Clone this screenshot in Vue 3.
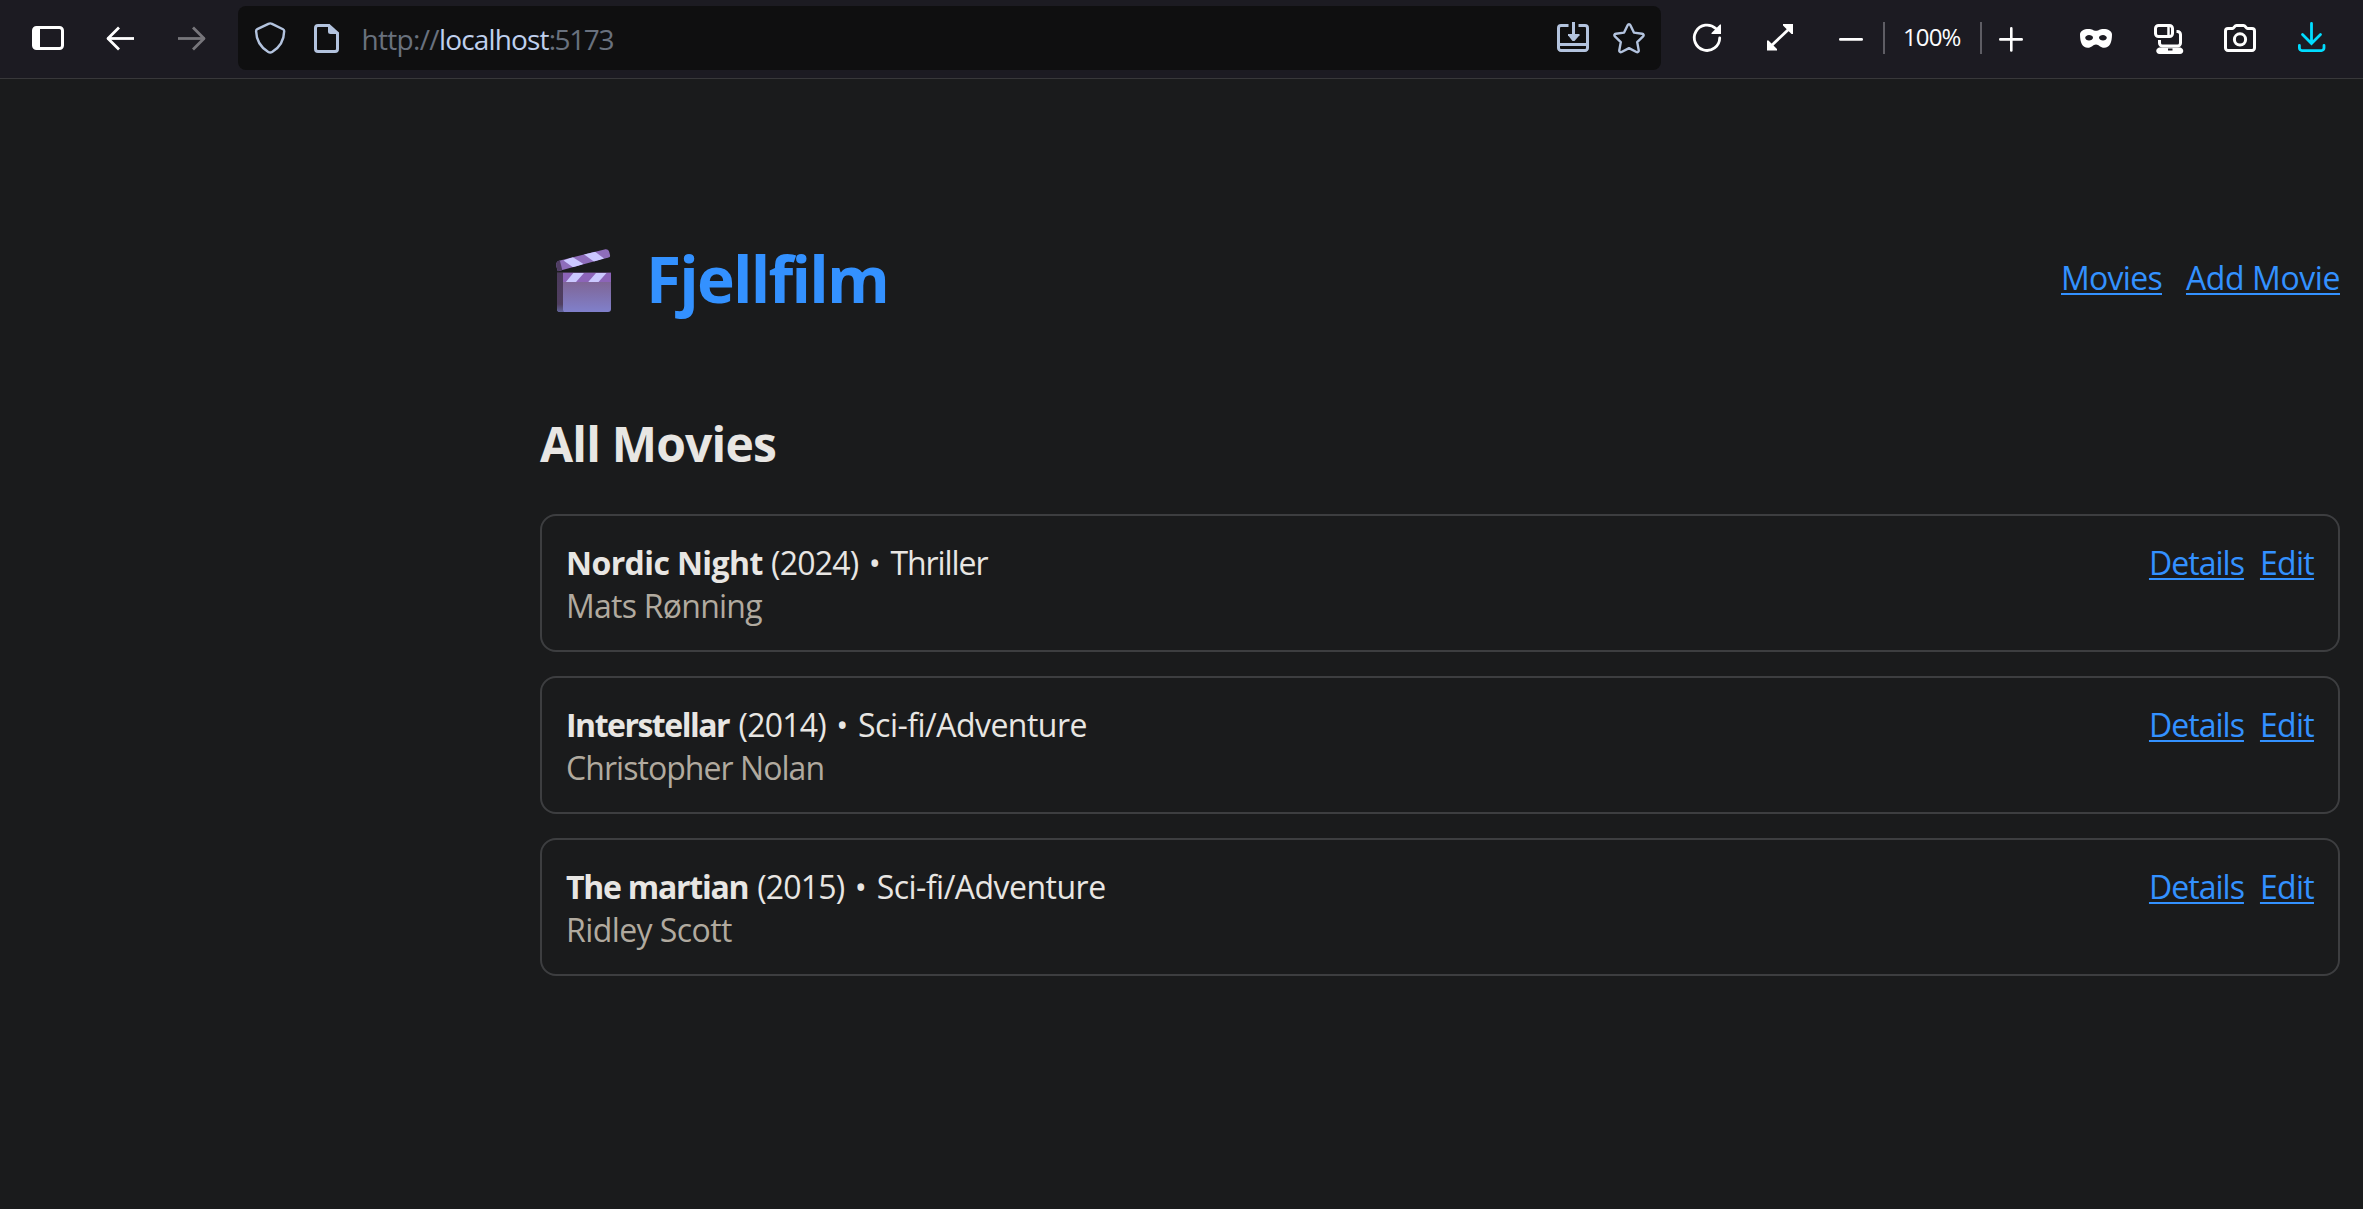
<script setup>
const movies = [
  { title: 'Nordic Night', year: 2024, genre: 'Thriller', director: 'Mats Rønning', slug: 'nordic' },
  { title: 'Interstellar', year: 2014, genre: 'Sci-fi/Adventure', director: 'Christopher Nolan', slug: 'interstellar' },
  { title: 'The martian', year: 2015, genre: 'Sci-fi/Adventure', director: 'Ridley Scott', slug: 'martian' },
]
</script>

<template>
  <div class="window">
    <div class="toolbar">
      <div class="nav-buttons">
        <svg class="icon" viewBox="0 0 32 32">
          <rect x="1.5" y="5.5" width="29" height="21" rx="3" fill="none" stroke="#fff" stroke-width="3" />
          <path d="M1 6h7v20H1z" fill="#fff" />
        </svg>
        <svg class="icon" viewBox="0 0 32 32" fill="none" stroke="#fff" stroke-width="2.8">
          <path d="M30 16.5H3.5" /><path d="M15 5.5 4 16.5l11 11" stroke-linejoin="round" />
        </svg>
        <svg class="icon" viewBox="0 0 32 32" fill="none" stroke="#77767b" stroke-width="2.8">
          <path d="M2 16.5h26.5" /><path d="M17 5.5l11 11-11 11" stroke-linejoin="round" />
        </svg>
      </div>

      <div class="urlbar">
        <svg class="icon" viewBox="0 0 32 32" fill="none" stroke="#b3c3de" stroke-width="2.4" stroke-linejoin="round">
          <path d="M16.2 1.4c-.6 0-1.200.2-1.800.5L3.300 7.200c-.8.4-1.200 1-1.200 1.900.2 8.400 3.500 15.600 12.200 20.900 1.300.8 2.500.8 3.800 0C26.800 24.700 30 17.500 30.200 9.100c0-.9-.4-1.500-1.200-1.900L18 1.900c-.6-.3-1.200-.5-1.800-.5z" />
        </svg>
        <svg class="icon page" viewBox="0 0 32 32">
          <path d="M19.5 3.5H8A2.500 2.500 0 0 0 5.500 6v21A2.500 2.500 0 0 0 8 29.500h17a2.500 2.500 0 0 0 2.500-2.500V11" fill="none" stroke="#b3c3de" stroke-width="3" />
          <path d="M18 2h1.500L29 10.500V12H20.500a2.500 2.500 0 0 1-2.500-2.500z" fill="#b3c3de" />
        </svg>
        <div class="url"><span class="scheme">http://</span><span class="host">localhost</span><span class="port">:5173</span></div>
        <svg class="icon" viewBox="0 0 32 32">
          <path d="M11.500 3.500H4A2.500 2.500 0 0 0 1.500 6v20A2.500 2.500 0 0 0 4 28.500h24a2.500 2.500 0 0 0 2.500-2.500V6A2.500 2.500 0 0 0 28 3.500h-6.500M2 22.500h28" fill="none" stroke="#b3c3de" stroke-width="3" />
          <path d="M16.500 0v13" stroke="#b3c3de" stroke-width="3" />
          <path d="M11 12h11.500v1.200L17.500 19h-2L11 13.200z" fill="#b3c3de" />
        </svg>
        <svg class="icon star" viewBox="0 0 32 32" fill="none" stroke="#b3c3de" stroke-width="2.4" stroke-linejoin="round">
          <path d="M14.600 3.200c.6-1.300 2.200-1.300 2.800 0l3.500 7.400 8.200 1.100c1.500.2 2 1.700 1 2.700l-5.900 5.700 1.500 8.200c.2 1.400-1 2.300-2.300 1.700L16 26.100l-7.400 3.900c-1.300.6-2.500-.3-2.300-1.700l1.500-8.200-5.900-5.700c-1-1-.5-2.500 1-2.700l8.200-1.100z" />
        </svg>
      </div>

      <svg class="icon reload" viewBox="0 0 32 32">
        <path d="M24.800 6.600A12.700 12.700 0 1 0 28.700 16" fill="none" stroke="#fff" stroke-width="2.8" stroke-linecap="round" />
        <path d="M30 2.500V12H20.500v-1L29 2.500z" fill="#fff" />
      </svg>
      <svg class="icon expand" viewBox="0 0 32 32">
        <path d="M6 25 26 6" stroke="#fff" stroke-width="2.8" />
        <path d="M19 2h10v10h-1.500L19 3.500zM3 18.500h1.500l8.500 8.500v1.500H3z" fill="#fff" />
      </svg>
      <svg class="icon minus" viewBox="0 0 32 32" stroke="#fff" stroke-width="2.6" stroke-linecap="round">
        <path d="M5.300 17.400h21.400" />
      </svg>
      <span class="rule"></span>
      <span class="zoom">100%</span>
      <span class="rule"></span>
      <svg class="icon plus" viewBox="0 0 32 32" stroke="#fff" stroke-width="2.6" stroke-linecap="round">
        <path d="M5.300 17.400h21.400M16.300 6.400v22" />
      </svg>
      <div class="extras">
        <svg class="icon" viewBox="0 0 32 32">
          <path fill="#fff" fill-rule="evenodd" d="M0 12.500C0 9 4 7 8.500 7c4 0 4.500 1.700 7.500 1.700S19.500 7 23.500 7C28 7 32 9 32 12.500c0 8-2.500 13.300-7.700 13.300-4 0-5.300-3.300-8.300-3.300s-4.300 3.300-8.300 3.300C2.500 25.800 0 20.500 0 12.500zM9 13c-2 0-3.800 1.500-3.800 2.700C5.200 17.300 7 18.500 9 18.500s4-1.200 4-2.800S11 13 9 13zm14 0c-2 0-4 1.100-4 2.700s2 2.800 4 2.800 3.800-1.200 3.800-2.800C26.800 14.500 25 13 23 13z" />
        </svg>
        <svg class="icon" viewBox="0 0 32 32">
          <rect x="3.5" y="3.5" width="17" height="11" rx="3" fill="none" stroke="#fff" stroke-width="3" />
          <path d="M16.500 5v8" stroke="#fff" stroke-width="2.5" />
          <path d="M24.500 9.500h1a3 3 0 0 1 3 3v8.500a3 3 0 0 1-3 3M7.500 18v3a3 3 0 0 0 3 3H26" fill="none" stroke="#fff" stroke-width="3" />
          <path fill="#fff" fill-rule="evenodd" d="M7 25.500h21.500c4 1.500 3.500 6.500-.5 6.500H7.500c-4 0-4.500-5-.5-6.500zM16 26.500v2h4.500v-2z" />
        </svg>
        <svg class="icon" viewBox="0 0 32 32" fill="none" stroke="#fff" stroke-width="3" stroke-linejoin="round">
          <path d="M4 6.500h4.500c1.500 0 2-3 4-3h7c2 0 2.500 3 4 3H28A2.500 2.500 0 0 1 30.500 9v17a2.500 2.500 0 0 1-2.500 2.500H4A2.500 2.500 0 0 1 1.500 26V9A2.500 2.500 0 0 1 4 6.500z" />
          <circle cx="16" cy="17.4" r="5.6" />
        </svg>
        <svg class="icon" viewBox="0 0 32 32" fill="none" stroke="#00ddff" stroke-width="2.8" stroke-linecap="round">
          <path d="M15.500 1.500v19.500M6.500 12.500l9 9 9-9M3.400 23.500v2.600a2.500 2.500 0 0 0 2.500 2.500h19.600a2.500 2.500 0 0 0 2.500-2.500v-2.600" />
        </svg>
      </div>
    </div>

    <main class="page-body">
      <header class="header">
        <div class="brand">
          <svg class="clapper" viewBox="0 0 56 64">
            <defs>
              <linearGradient id="board" x1="0" y1="0" x2="0" y2="1">
                <stop offset="0.1" stop-color="#7f618d" /><stop offset="1" stop-color="#8080cb" />
              </linearGradient>
              <linearGradient id="edge" x1="0" y1="0" x2="0" y2="1">
                <stop offset="0" stop-color="#4b3a5c" /><stop offset=".8" stop-color="#503f60" /><stop offset="1" stop-color="#61649a" />
              </linearGradient>
              <clipPath id="arm"><path d="M3 11.700 48.500.4c2.600-.6 4.200.5 4.900 3l.6 2.600c.3 1.500-.2 2.200-1.500 2.600L1.800 22.200.4 17.500c-.7-3 .2-5.200 2.600-5.800z" /></clipPath>
            </defs>
            <path d="M1 23.700h54V60a3 3 0 0 1-3 3H4a3 3 0 0 1-3-3z" fill="url(#board)" />
            <path d="M1 23.700h6V61l1 2H4a3 3 0 0 1-3-3z" fill="url(#edge)" />
            <path d="M7 23.700h48V33H7z" fill="#8c64b8" />
            <path d="M17.300 24H28l-8 9H9.900zM40 24h10.500l-8 9H32.200z" fill="#cbc8ff" />
            <g clip-path="url(#arm)">
              <path d="M0 0h56v24H0z" fill="#8e6dbb" />
              <path d="M0 10h3.500L6.500 22H0z" fill="#4f3d62" />
              <path d="M7.500 11.500 16.500 8l11 7-9.500 4zM27.500 5l10-3.500 10.500 8L38.500 13z" fill="#cbc8ff" />
            </g>
          </svg>
          <h1>Fjellfilm</h1>
        </div>
        <nav class="links">
          <a class="movies">Movies</a>
          <a class="add">Add Movie</a>
        </nav>
      </header>

      <h2>All Movies</h2>

      <ul class="list">
        <li v-for="m in movies" :key="m.slug" class="card" :class="m.slug">
          <div>
            <div class="line"><strong>{{ m.title }}</strong> <span class="year">({{ m.year }})</span> <span class="dot">•</span> <span class="genre">{{ m.genre }}</span></div>
            <div class="line director">{{ m.director }}</div>
          </div>
          <div class="actions">
            <a class="details">Details</a>
            <a class="edit">Edit</a>
          </div>
        </li>
      </ul>
    </main>
  </div>
</template>

<style>
body {
  background: #181a1b;
}
</style>

<style scoped>
.window {
  box-sizing: border-box;
  height: 1209px;
  overflow: hidden;
  background: #1a1b1c;
  color: #e8e6e3;
  font: 32px/43px "Segoe UI", "Open Sans", "Noto Sans", sans-serif;
}
.toolbar {
  display: flex;
  align-items: center;
  box-sizing: border-box;
  height: 79px;
  padding: 0 0 2px 32px;
  border-bottom: 1px solid #38383a;
  background: #1c1b22;
}
.icon {
  flex: none;
  display: block;
  width: 32px;
  height: 32px;
}
.nav-buttons,
.extras {
  display: flex;
  gap: 40px;
}
.urlbar {
  display: flex;
  align-items: center;
  box-sizing: border-box;
  width: 1423px;
  height: 64px;
  margin-left: 30px;
  padding: 0 16px;
  border-radius: 8px;
  background: #0f0f10;
}
.page {
  margin-left: 24px;
}
.url {
  flex: 1;
  margin-left: 19.5px;
  padding-top: 2px;
  font-size: 28px;
  line-height: 38px;
  white-space: nowrap;
  color: #69717e;
}
.scheme {
  letter-spacing: -0.67px;
}
.host {
  color: #bfd0ee;
  letter-spacing: -0.85px;
}
.port {
  letter-spacing: -1.4px;
}
.star {
  margin-left: 24px;
}
.reload {
  margin-left: 30px;
}
.expand {
  margin-left: 41px;
}
.minus {
  margin-left: 39px;
}
.rule {
  width: 2px;
  height: 32px;
  margin-left: 16px;
  background: #5e5d64;
}
.zoom {
  width: 61px;
  margin-left: 18px;
  padding-bottom: 2px;
  color: #fbfbfe;
  font-size: 24px;
  line-height: 32px;
  letter-spacing: -0.87px;
}
.plus {
  margin-left: 13px;
}
.extras {
  margin-left: 53px;
}
.page-body {
  width: 1800px;
  margin-left: 540px;
  padding-top: 155px;
}
.header {
  display: flex;
  align-items: center;
  justify-content: space-between;
  height: 85px;
}
.brand {
  display: flex;
  align-items: center;
  gap: 34px;
  padding-left: 16px;
}
.clapper {
  width: 56px;
  height: 64px;
  margin-top: 9px;
}
h1 {
  margin: 4px 0 0;
  color: #3391ff;
  font-size: 64px;
  line-height: 85px;
  letter-spacing: -1.79px;
}
.links {
  display: flex;
  gap: 24px;
  padding-top: 2px;
}
a {
  color: #3391ff;
  text-decoration: underline;
  text-decoration-thickness: 2px;
  text-underline-offset: 3px;
}
.movies {
  letter-spacing: -0.72px;
}
.add {
  letter-spacing: -0.42px;
}
h2 {
  margin: 93px 0 38px;
  font-size: 48px;
  line-height: 64px;
  letter-spacing: -0.8px;
}
.list {
  display: flex;
  flex-direction: column;
  gap: 24px;
  margin: 0;
  padding: 0;
  list-style: none;
}
.card {
  display: flex;
  justify-content: space-between;
  padding: 25px 24px 23px;
  border: 2px solid #3d3e40;
  border-radius: 16px;
}
.line {
  white-space: nowrap;
}
.director {
  color: #b1aa9f;
}
.year {
  letter-spacing: -0.8px;
}
.dot {
  margin: 0 1.6px 0 2px;
}
.genre {
  letter-spacing: -0.53px;
}
.nordic strong {
  letter-spacing: -0.6px;
}
.nordic .genre {
  letter-spacing: -1.1px;
}
.nordic .director {
  letter-spacing: -0.75px;
}
.interstellar strong {
  margin-right: 1.2px;
  letter-spacing: -1.5px;
}
.interstellar .director {
  letter-spacing: -0.95px;
}
.martian strong {
  margin-right: 0.6px;
  letter-spacing: -1.25px;
}
.martian .director {
  letter-spacing: -0.57px;
}
.actions {
  display: flex;
  gap: 16px;
}
.details {
  letter-spacing: -0.97px;
}
.edit {
  letter-spacing: -0.7px;
}
</style>
